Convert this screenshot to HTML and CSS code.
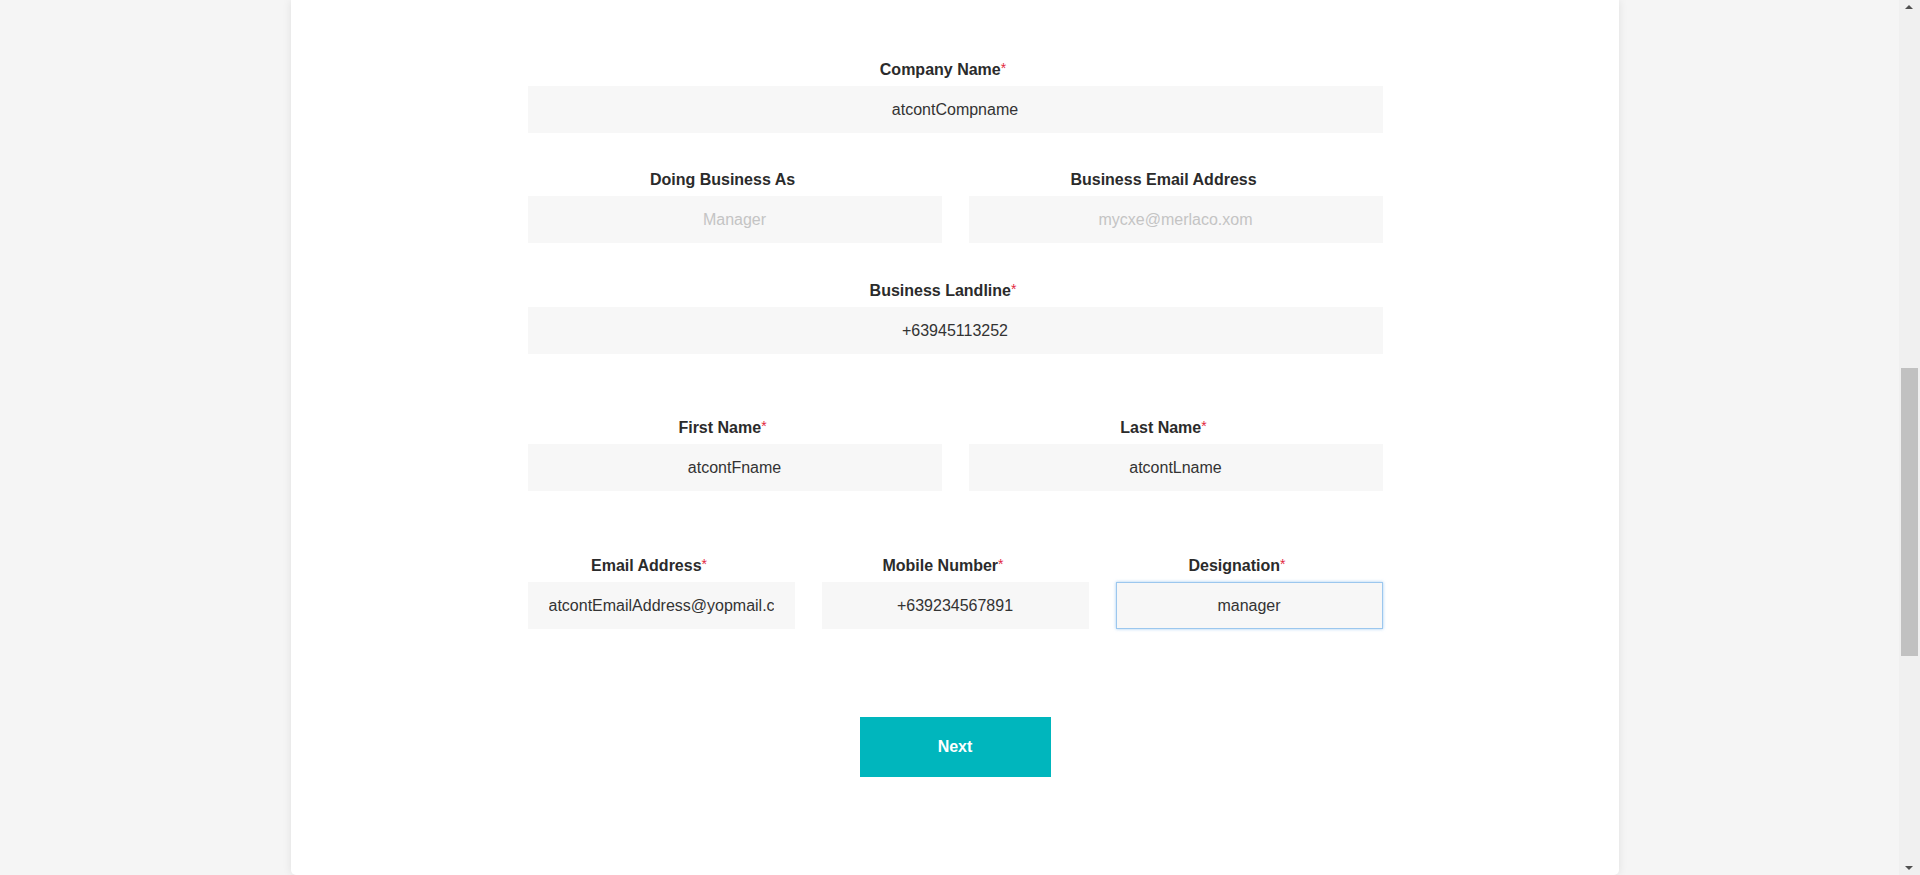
FILE: index.html
```html
<!DOCTYPE html>
<html lang="en">
<head>
<meta charset="utf-8">
<title>Company Details</title>
<link rel="stylesheet" href="styles.css">
</head>
<body>
<main class="page">
  <section class="card">
    <form class="form">
      <div class="row row-1 gap-s">
        <div class="field">
          <label class="label">Company Name<span class="req">*</span></label>
          <input class="input" type="text" value="atcontCompname">
        </div>
      </div>
      <div class="row row-2 gap-s2">
        <div class="field">
          <label class="label">Doing Business As</label>
          <input class="input" type="text" placeholder="Manager">
        </div>
        <div class="field">
          <label class="label">Business Email Address</label>
          <input class="input" type="text" placeholder="mycxe@merlaco.xom">
        </div>
      </div>
      <div class="row row-1 gap-l">
        <div class="field">
          <label class="label">Business Landline<span class="req">*</span></label>
          <input class="input" type="text" value="+63945113252">
        </div>
      </div>
      <div class="row row-2 gap-l2">
        <div class="field">
          <label class="label">First Name<span class="req">*</span></label>
          <input class="input" type="text" value="atcontFname">
        </div>
        <div class="field">
          <label class="label">Last Name<span class="req">*</span></label>
          <input class="input" type="text" value="atcontLname">
        </div>
      </div>
      <div class="row row-3">
        <div class="field">
          <label class="label">Email Address<span class="req">*</span></label>
          <input class="input" type="text" value="atcontEmailAddress@yopmail.com">
        </div>
        <div class="field">
          <label class="label">Mobile Number<span class="req">*</span></label>
          <input class="input" type="text" value="+639234567891">
        </div>
        <div class="field">
          <label class="label">Designation<span class="req">*</span></label>
          <input class="input focused" type="text" value="manager">
        </div>
      </div>
      <div class="actions">
        <button class="btn" type="button">Next</button>
      </div>
    </form>
  </section>
</main>
<div class="scrollbar">
  <span class="arrow arrow-up"></span>
  <span class="thumb"></span>
  <span class="arrow arrow-down"></span>
</div>
</body>
</html>
```
FILE: styles.css
```css
html, body {
  margin: 0;
  padding: 0;
  height: 100%;
  overflow: hidden;
}
body {
  background: #f5f5f5;
  font-family: "Liberation Sans", Arial, Helvetica, sans-serif;
  color: #333333;
}
.page {
  padding-left: 291px;
}
.card {
  width: 1328px;
  box-sizing: border-box;
  background: #ffffff;
  padding: 61px 0 98px;
  border-radius: 0 0 5px 5px;
  box-shadow: 0 0 10px rgba(0, 0, 0, 0.09);
}
.form {
  width: 855px;
  margin: 0 auto;
}
.row {
  display: grid;
  column-gap: 27px;
}
.row-1 { grid-template-columns: 1fr; }
.row-2 { grid-template-columns: 1fr 1fr; }
.row-3 { grid-template-columns: 1fr 1fr 1fr; }
.gap-s { margin-bottom: 38px; }
.gap-s2 { margin-bottom: 39px; }
.gap-l { margin-bottom: 65px; }
.gap-l2 { margin-bottom: 66px; }
.field {
  display: flex;
  flex-direction: column;
}
.label {
  display: block;
  height: 18px;
  text-align: center;
  font-size: 16px;
  line-height: 18px;
  font-weight: bold;
  color: #2b2b2b;
  margin-bottom: 7px;
  padding-right: 24px;
}
.req {
  color: #e2283f;
  font-weight: normal;
  font-size: 14px;
  line-height: 0;
  vertical-align: 2px;
}
.input {
  display: block;
  width: 100%;
  height: 47px;
  box-sizing: border-box;
  border: 1px solid transparent;
  background: #f7f7f7;
  padding: 0 20px;
  font-family: "Liberation Sans", Arial, Helvetica, sans-serif;
  font-size: 16px;
  color: #333333;
  text-align: center;
  outline: none;
}
.input::placeholder {
  color: #c4c4c4;
  opacity: 1;
}
.input.focused {
  border-color: #9cc7ee;
  box-shadow: 0 0 3px rgba(102, 170, 233, 0.6);
}
.actions {
  display: flex;
  justify-content: center;
  margin-top: 88px;
}
.btn {
  width: 191px;
  height: 60px;
  border: none;
  background: #00b6bd;
  color: #ffffff;
  font-family: "Liberation Sans", Arial, Helvetica, sans-serif;
  font-size: 16px;
  font-weight: bold;
  cursor: pointer;
}
.scrollbar {
  position: fixed;
  top: 0;
  right: 0;
  width: 21px;
  height: 100%;
  background: #f0f0f0;
}
.thumb {
  position: absolute;
  left: 2px;
  top: 368px;
  width: 17px;
  height: 288px;
  background: #c1c1c1;
}
.arrow {
  position: absolute;
  left: 6px;
  width: 0;
  height: 0;
  border-left: 4.5px solid transparent;
  border-right: 4.5px solid transparent;
}
.arrow-up {
  top: 5px;
  border-bottom: 4px solid #505050;
}
.arrow-down {
  bottom: 5px;
  border-top: 4px solid #505050;
}
```
